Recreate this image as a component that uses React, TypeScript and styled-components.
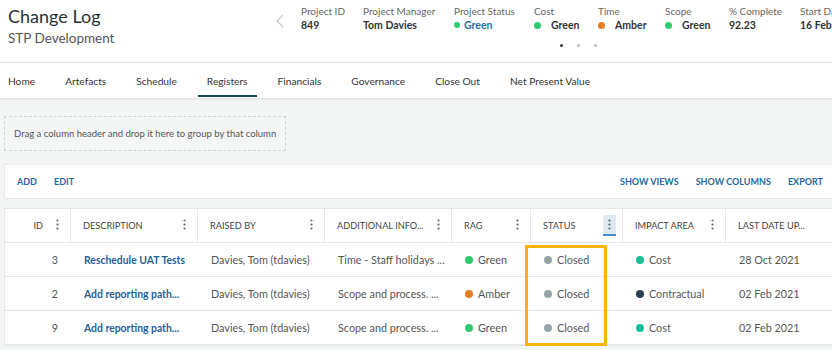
import styled, { createGlobalStyle } from 'styled-components';

const GlobalStyle = createGlobalStyle`
  html, body {
    margin: 0;
    padding: 0;
    background: #f4f5f5;
    font-family: Lato, "Open Sans", sans-serif;
    overflow: hidden;
  }
  * { box-sizing: border-box; }
`;

const Page = styled.div`
  width: 832px;
  height: 350px;
  overflow: hidden;
  background: #f4f5f5;
`;

const Header = styled.header`
  height: 63px;
  background: #fff;
  border-bottom: 1px solid #e4e6e6;
  display: flex;
  align-items: flex-start;
  white-space: nowrap;
`;

const TitleBlock = styled.div`
  width: 276px;
  padding: 4px 0 0 8px;
  flex-shrink: 0;
`;

const Title = styled.h1`
  margin: 0;
  font-size: 18px;
  font-weight: 400;
  color: #263238;
  line-height: 25px;
`;

const Subtitle = styled.div`
  font-size: 13.5px;
  color: #555;
  line-height: 18px;
`;

const Chevron = styled.div`
  width: 25px;
  padding-top: 14px;
  flex-shrink: 0;
  svg { display: block; }
`;

const MetricsWrap = styled.div`
  flex: 1;
  height: 100%;
  overflow: hidden;
`;

const Metrics = styled.div`
  display: flex;
  padding-top: 4px;
`;

const Metric = styled.div<{ $w: number }>`
  width: ${p => p.$w}px;
  flex-shrink: 0;
  line-height: 14px;
`;

const Label = styled.div`
  color: #666;
  font-size: 10px;
`;

const Value = styled.div<{ $link?: boolean; $gap?: number }>`
  color: ${p => (p.$link ? '#1f6fa8' : '#333')};
  font-size: 10.5px;
  font-weight: 700;
  display: flex;
  align-items: center;
  gap: ${p => p.$gap ?? 0}px;
`;

const Dot = styled.span<{ $c: string; $s?: number }>`
  display: inline-block;
  width: ${p => p.$s ?? 8}px;
  height: ${p => p.$s ?? 8}px;
  border-radius: 50%;
  background: ${p => p.$c};
  flex-shrink: 0;
`;

const Pager = styled.div`
  display: flex;
  gap: 14px;
  margin: 12px 0 0 259px;
`;

const PagerDot = styled.span<{ $on?: boolean }>`
  width: 3px;
  height: 3px;
  border-radius: 50%;
  background: ${p => (p.$on ? '#333' : '#bbb')};
`;

const Tabs = styled.nav`
  height: 36px;
  background: #fff;
  display: flex;
  padding-left: 8px;
  border-bottom: 1px solid #e4e6e6;
  box-shadow: 0 1px 2px rgba(0, 0, 0, 0.05);
`;

const Tab = styled.div<{ $active?: boolean }>`
  position: relative;
  font-size: 10.2px;
  color: #333;
  line-height: 36px;
  margin-right: 30px;
  ${p =>
    p.$active &&
    `&::after {
      content: '';
      position: absolute;
      left: -9px;
      right: -9px;
      bottom: 1px;
      height: 2px;
      background: #184b4b;
    }`}
`;

const Body = styled.div`
  padding: 17px 0 0 4px;
`;

const DropZone = styled.div`
  width: 282px;
  height: 35px;
  border: 1px dashed #cfd3d3;
  font-size: 9.5px;
  color: #555;
  display: flex;
  align-items: center;
  padding-left: 9px;
  white-space: nowrap;
`;

const Toolbar = styled.div`
  margin-top: 13px;
  height: 35px;
  background: #fff;
  border: 1px solid #e6e8e8;
  border-right: none;
  display: flex;
  align-items: center;
  padding: 0 0 0 12px;
`;

const ToolGroup = styled.div<{ $right?: boolean }>`
  display: flex;
  gap: 17px;
  margin-left: ${p => (p.$right ? 'auto' : '0')};
  padding-right: ${p => (p.$right ? '9px' : '0')};
`;

const ToolButton = styled.span`
  font-size: 9px;
  color: #2468a2;
  font-weight: 700;
`;

const GridWrap = styled.div`
  position: relative;
  margin-top: 9px;
`;

const Grid = styled.div`
  background: #fff;
  border: 1px solid #e6e8e8;
  border-right: none;
  display: grid;
  grid-template-columns: 66px 127px 127px 127px 79px 92px 103px 140px;
`;

const HeadCell = styled.div<{ $right?: boolean }>`
  height: 34px;
  border-right: 1px solid #e6e8e8;
  border-bottom: 1px solid #e6e8e8;
  display: flex;
  align-items: center;
  justify-content: ${p => (p.$right ? 'flex-end' : 'space-between')};
  gap: 8px;
  padding: 0 6px 0 12px;
  font-size: 9.2px;
  color: #444;
  text-transform: uppercase;
  white-space: nowrap;
`;

const Kebab = styled.span<{ $active?: boolean }>`
  width: 13px;
  height: 21px;
  display: flex;
  align-items: center;
  justify-content: center;
  background: ${p => (p.$active ? '#dde9f3' : 'transparent')};
  border-bottom: 2px solid ${p => (p.$active ? '#3d8fd6' : 'transparent')};
  svg { display: block; }
`;

const Cell = styled.div<{ $right?: boolean; $link?: boolean }>`
  height: 34px;
  border-bottom: 1px solid #e6e8e8;
  display: flex;
  align-items: center;
  justify-content: ${p => (p.$right ? 'flex-end' : 'flex-start')};
  gap: 5px;
  padding: ${p => (p.$right ? '0 13px 0 0' : '0 0 0 13px')};
  font-size: ${p => (p.$link ? '10.4px' : '10.8px')};
  color: ${p => (p.$link ? '#1f5f99' : '#555')};
  font-weight: ${p => (p.$link ? 700 : 400)};
  white-space: nowrap;
  overflow: hidden;
`;

const Highlight = styled.div`
  position: absolute;
  left: 521px;
  top: 37px;
  width: 82px;
  height: 101px;
  border: 3px solid #f7b500;
  pointer-events: none;
`;

const KebabIcon = () => (
  <svg width="3" height="11" viewBox="0 0 3 11">
    <circle cx="1.5" cy="1.5" r="1.1" fill="#666" />
    <circle cx="1.5" cy="5.5" r="1.1" fill="#666" />
    <circle cx="1.5" cy="9.5" r="1.1" fill="#666" />
  </svg>
);

const metrics = [
  { label: 'Project ID', value: '849', w: 62 },
  { label: 'Project Manager', value: 'Tom Davies', w: 91 },
  { label: 'Project Status', value: 'Green', w: 80, dot: '#2ecc71', link: true, gap: 4 },
  { label: 'Cost', value: 'Green', w: 64, dot: '#2ecc71', gap: 10 },
  { label: 'Time', value: 'Amber', w: 67, dot: '#e67e22', gap: 10 },
  { label: 'Scope', value: 'Green', w: 64, dot: '#2ecc71', gap: 10 },
  { label: '% Complete', value: '92.23', w: 71 },
  { label: 'Start Date', value: '16 Feb 2021', w: 80 },
];

const tabs = ['Home', 'Artefacts', 'Schedule', 'Registers', 'Financials', 'Governance', 'Close Out', 'Net Present Value'];

const columns = ['ID', 'Description', 'Raised By', 'Additional Info...', 'RAG', 'Status', 'Impact Area', 'Last Date Up...'];

const rows = [
  { id: '3', desc: 'Reschedule UAT Tests', info: 'Time - Staff holidays ...', rag: ['Green', '#2ecc71'], impact: ['Cost', '#1abc9c'], date: '28 Oct 2021' },
  { id: '2', desc: 'Add reporting path...', info: 'Scope and process. ...', rag: ['Amber', '#e67e22'], impact: ['Contractual', '#2c3e50'], date: '02 Feb 2021' },
  { id: '9', desc: 'Add reporting path...', info: 'Scope and process. ...', rag: ['Green', '#2ecc71'], impact: ['Cost', '#1abc9c'], date: '02 Feb 2021' },
];

export default function App() {
  return (
    <Page>
      <GlobalStyle />
      <Header>
        <TitleBlock>
          <Title>Change Log</Title>
          <Subtitle>STP Development</Subtitle>
        </TitleBlock>
        <Chevron>
          <svg width="8" height="14" viewBox="0 0 8 14">
            <path d="M7 1 L1 7 L7 13" fill="none" stroke="#c8c8c8" strokeWidth="1.2" />
          </svg>
        </Chevron>
        <MetricsWrap>
          <Metrics>
            {metrics.map(m => (
              <Metric key={m.label} $w={m.w}>
                <Label>{m.label}</Label>
                <Value $link={m.link} $gap={m.gap}>
                  {m.dot && <Dot $c={m.dot} $s={m.link ? 6 : 7} />}
                  {m.value}
                </Value>
              </Metric>
            ))}
          </Metrics>
          <Pager>
            <PagerDot $on />
            <PagerDot />
            <PagerDot />
          </Pager>
        </MetricsWrap>
      </Header>
      <Tabs>
        {tabs.map(t => (
          <Tab key={t} $active={t === 'Registers'}>
            {t}
          </Tab>
        ))}
      </Tabs>
      <Body>
        <DropZone>Drag a column header and drop it here to group by that column</DropZone>
        <Toolbar>
          <ToolGroup>
            <ToolButton>ADD</ToolButton>
            <ToolButton>EDIT</ToolButton>
          </ToolGroup>
          <ToolGroup $right>
            <ToolButton>SHOW VIEWS</ToolButton>
            <ToolButton>SHOW COLUMNS</ToolButton>
            <ToolButton>EXPORT</ToolButton>
          </ToolGroup>
        </Toolbar>
        <GridWrap>
          <Grid>
            {columns.map((c, i) => (
              <HeadCell key={c} $right={i === 0}>
                <span>{c}</span>
                <Kebab $active={c === 'Status'}>
                  <KebabIcon />
                </Kebab>
              </HeadCell>
            ))}
            {rows.map(r => [
              <Cell key={r.id + 'id'} $right>{r.id}</Cell>,
              <Cell key={r.id + 'd'} $link>{r.desc}</Cell>,
              <Cell key={r.id + 'r'}>Davies, Tom (tdavies)</Cell>,
              <Cell key={r.id + 'i'}>{r.info}</Cell>,
              <Cell key={r.id + 'g'}><Dot $c={r.rag[1]} />{r.rag[0]}</Cell>,
              <Cell key={r.id + 's'}><Dot $c="#95a5a6" />Closed</Cell>,
              <Cell key={r.id + 'm'}><Dot $c={r.impact[1]} />{r.impact[0]}</Cell>,
              <Cell key={r.id + 't'}>{r.date}</Cell>,
            ])}
          </Grid>
          <Highlight />
        </GridWrap>
      </Body>
    </Page>
  );
}
